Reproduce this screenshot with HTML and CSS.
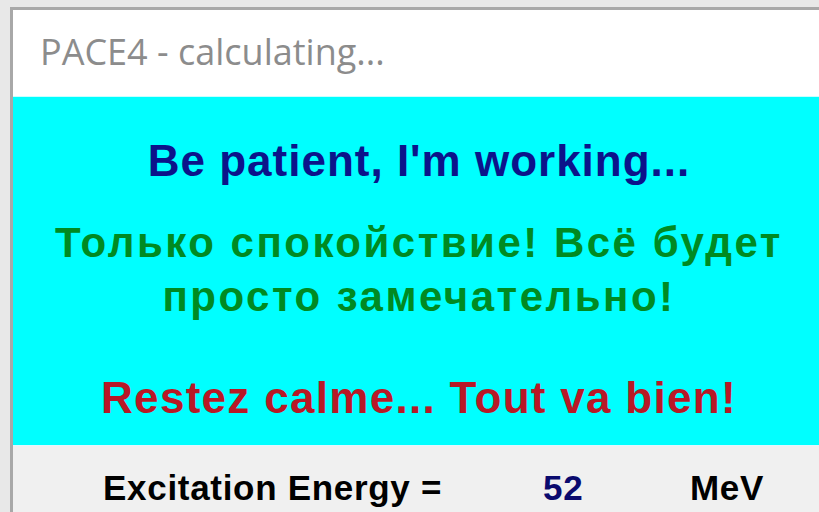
FILE: index.html
```html
<!DOCTYPE html>
<html lang="en">
<head>
<meta charset="utf-8">
<title>PACE4 - calculating...</title>
<link rel="stylesheet" href="styles.css">
</head>
<body>
  <div class="window">
    <div class="titlebar">PACE4 - calculating...</div>
    <div class="banner">
      <p class="msg msg-en">Be patient, I'm working...</p>
      <p class="msg msg-ru">Только спокойствие! Всё будет<br>просто замечательно!</p>
      <p class="msg msg-fr">Restez calme... Tout va bien!</p>
    </div>
    <div class="status">
      <span class="status-label">Excitation Energy =</span>
      <span class="status-value">52</span>
      <span class="status-unit">MeV</span>
    </div>
  </div>
</body>
</html>
```

FILE: styles.css
```css
html, body {
  margin: 0;
  padding: 0;
  height: 100%;
  overflow: hidden;
}

body {
  background: #e8e8e8;
  padding: 7px 0 0 10px;
  box-sizing: border-box;
}

.window {
  width: 812px;
  border-left: 3px solid #a8a8a8;
  border-top: 3px solid #a8a8a8;
  background: #f0f0f0;
  height: 520px;
}

.titlebar {
  height: 86px;
  background: #ffffff;
  box-sizing: border-box;
  padding: 19px 0 0 27px;
  font-family: "Open Sans", "Noto Sans", sans-serif;
  font-size: 36px;
  line-height: 46px;
  color: #8c8c8c;
  white-space: nowrap;
}

.banner {
  height: 349px;
  background: #00ffff;
  border-top: 1px solid #c8ffff;
  box-sizing: border-box;
  display: flex;
  flex-direction: column;
  align-items: center;
  text-align: center;
  font-family: "Liberation Sans", Arial, sans-serif;
  font-weight: bold;
}

.msg {
  margin: 0;
  white-space: nowrap;
}

.msg-en {
  margin-top: 42px;
  font-size: 44px;
  line-height: 44px;
  letter-spacing: 1px;
  color: #0c148a;
}

.msg-ru {
  margin-top: 33px;
  font-size: 42px;
  line-height: 54px;
  letter-spacing: 2.5px;
  color: #008a22;
}

.msg-fr {
  margin-top: 52px;
  font-size: 44px;
  line-height: 44px;
  letter-spacing: 1.3px;
  color: #b81826;
}

.status {
  border-top: 1px solid #dff8ff;
  padding: 24px 0 0 90px;
  display: flex;
  align-items: baseline;
  font-family: "Liberation Sans", Arial, sans-serif;
  font-weight: bold;
  font-size: 35px;
  line-height: 35px;
  letter-spacing: 0.7px;
  color: #000000;
  white-space: nowrap;
}

.status-label {
  width: 440px;
}

.status-value {
  width: 147px;
  color: #0a0a6e;
}
```
